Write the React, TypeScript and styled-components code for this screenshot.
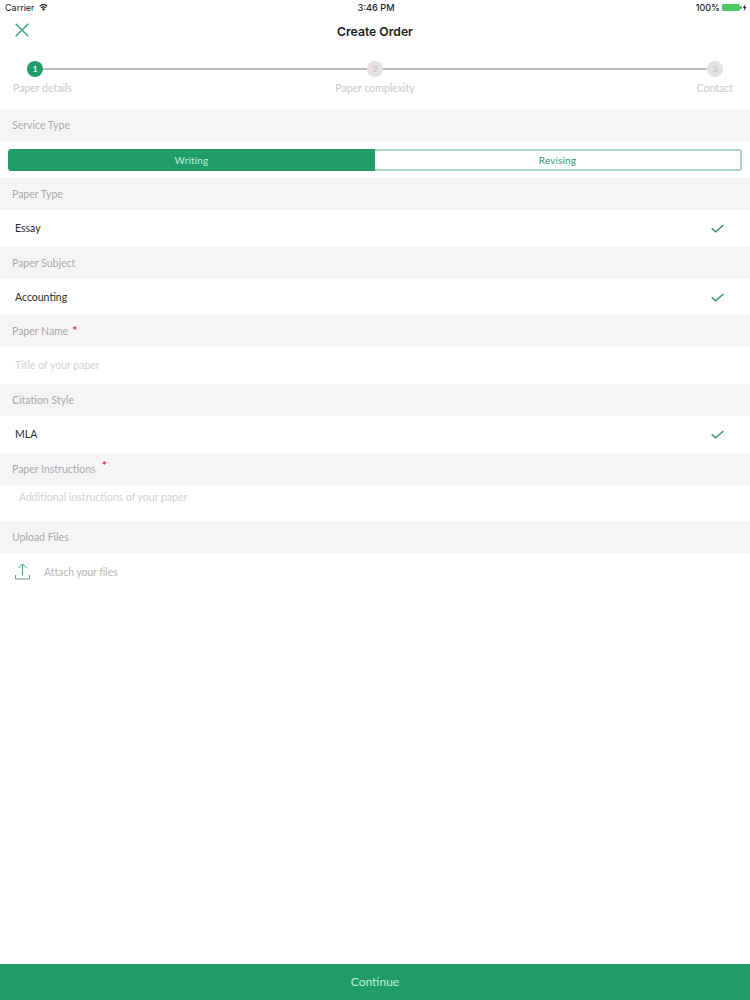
import React from "react";
import styled, { createGlobalStyle } from "styled-components";

const Global = createGlobalStyle`
  html, body { margin: 0; padding: 0; background: #fff; }
  * { box-sizing: border-box; }
`;

const GREEN = "#1f9c69";

const Page = styled.div`
  width: 750px;
  height: 1000px;
  display: flex;
  flex-direction: column;
  font-family: Lato, "Liberation Sans", sans-serif;
  background: #fff;
  overflow: hidden;
`;

const StatusBar = styled.div`
  height: 15px;
  display: grid;
  grid-template-columns: 1fr auto 1fr;
  align-items: center;
  padding: 0 3px 0 5px;
  font-family: Inter, "Liberation Sans", sans-serif;
  font-size: 9px;
  color: #222;
`;

const StatusLeft = styled.div`
  display: flex;
  align-items: center;
  gap: 4px;
`;

const StatusTime = styled.div`
  font-weight: 500;
  font-size: 9.2px;
`;

const StatusRight = styled.div`
  display: flex;
  align-items: center;
  justify-content: flex-end;
  gap: 2px;
  font-weight: 500;
`;

const NavBar = styled.div`
  height: 32px;
  display: flex;
  align-items: center;
  justify-content: center;
  position: relative;
`;

const CloseButton = styled.div`
  position: absolute;
  left: 15px;
  top: 8px;
  width: 14px;
  height: 14px;
  display: flex;
`;

const Title = styled.div`
  font-family: Inter, "Liberation Sans", sans-serif;
  font-size: 12.2px;
  font-weight: 600;
  color: #1c1c1c;
`;

const Stepper = styled.div`
  height: 62px;
  padding-top: 14px;
`;

const Track = styled.div`
  display: flex;
  align-items: center;
  padding: 0 27px;
`;

const StepDot = styled.div<{ $active?: boolean }>`
  width: 16px;
  height: 16px;
  flex: none;
  border-radius: 50%;
  display: flex;
  align-items: center;
  justify-content: center;
  font-size: 8px;
  font-weight: 700;
  background: ${(p) => (p.$active ? GREEN : "#e3e1e3")};
  color: ${(p) => (p.$active ? "#fff" : "#c4c2c4")};
`;

const StepLine = styled.div`
  flex: 1;
  height: 2px;
  background: #bdbabc;
`;

const StepLabels = styled.div`
  display: grid;
  grid-template-columns: 1fr auto 1fr;
  padding: 5px 17px 0 13px;
  font-size: 10.5px;
  line-height: 13px;
  color: #c9c9c9;
`;

const MiddleLabel = styled.span`
  margin-left: 4px;
`;

const EndLabel = styled.span`
  text-align: right;
`;

const SectionHeader = styled.div`
  height: 32px;
  background: #f6f5f6;
  padding: 0 12px;
  display: flex;
  align-items: center;
  font-size: 10.5px;
  color: #a9a9a9;
`;

const Required = styled.span<{ $raised?: boolean }>`
  color: #d9304a;
  font-size: 12px;
  font-weight: 700;
  margin-left: ${(p) => (p.$raised ? "6px" : "4px")};
  transform: translateY(${(p) => (p.$raised ? "-3px" : "-1px")});
`;

const SegmentWrap = styled.div`
  height: 37px;
  padding: 8px 8px 7px;
  display: flex;
`;

const SegmentButton = styled.div<{ $active?: boolean; $side: "left" | "right" }>`
  flex: 1 1 0;
  display: flex;
  align-items: center;
  justify-content: center;
  font-size: 10px;
  letter-spacing: 0.15px;
  border: ${(p) => (p.$active ? `1px solid ${GREEN}` : "2px solid #a9d5c2")};
  ${(p) => (p.$side === "right" ? "border-left: none;" : "")}
  border-radius: ${(p) => (p.$side === "left" ? "3px 0 0 3px" : "0 3px 3px 0")};
  background: ${(p) => (p.$active ? GREEN : "#fff")};
  color: ${(p) => (p.$active ? "#bdf0d6" : GREEN)};
`;

const Row = styled.div<{ $inset?: number; $top?: boolean }>`
  height: 36.7px;
  display: flex;
  align-items: ${(p) => (p.$top ? "flex-start" : "center")};
  justify-content: space-between;
  padding: ${(p) => (p.$top ? "6px" : "0")} 26px ${(p) => (p.$top ? "0" : "1px")} ${(p) => p.$inset ?? 15}px;
`;

const Value = styled.div`
  font-size: 10.5px;
  color: #2a2a2a;
`;

const Placeholder = styled.div`
  font-size: 10.5px;
  color: #d2d2d2;
`;

const AttachRow = styled.div`
  height: 37px;
  display: flex;
  align-items: center;
  gap: 14px;
  padding-left: 15px;
  font-size: 10.5px;
  letter-spacing: -0.08px;
  color: #b5b5b5;
`;

const Spacer = styled.div`
  flex: 1;
`;

const ContinueBar = styled.div`
  height: 36px;
  background: ${GREEN};
  color: #bdf0d6;
  display: flex;
  align-items: center;
  justify-content: center;
  font-size: 12px;
  padding-bottom: 1px;
`;

const Wifi = () => (
  <svg width="9" height="7" viewBox="0 0 12 9" fill="#222">
    <path d="M6 9 3.9 6.4a3.4 3.4 0 0 1 4.2 0Z" />
    <path d="M3.2 5.5 2.2 4.3a6 6 0 0 1 7.6 0l-1 1.2a4.5 4.5 0 0 0-5.6 0Z" />
    <path d="M1.5 3.4.4 2.1a8.8 8.8 0 0 1 11.2 0l-1.1 1.3a7.2 7.2 0 0 0-9 0Z" />
  </svg>
);

const Battery = () => (
  <svg width="25" height="7" viewBox="0 0 25 7">
    <rect x="0" y="0" width="18" height="7" rx="1.5" fill="#4cc864" />
    <rect x="18.4" y="2.2" width="1.2" height="2.6" rx="0.5" fill="#333" />
    <path d="M23.5 0 20.8 3.9h1.5L21.8 7l2.8-4H23Z" fill="#222" />
  </svg>
);

const CloseIcon = () => (
  <svg width="14" height="14" viewBox="0 0 14 14" fill="none" stroke="#3aa57e" strokeWidth="1.4">
    <path d="M.7.7l12.6 12.6M13.3.7.7 13.3" />
  </svg>
);

const Check = () => (
  <svg width="13" height="11" viewBox="0 0 13 11" fill="none" stroke="#3d8f72" strokeWidth="1.4">
    <path d="M.7 6.4 4.7 9.8 12.4 3" />
  </svg>
);

const UploadIcon = () => (
  <svg width="15" height="17" viewBox="0 0 15 17" fill="none" stroke="#3aa57e" strokeWidth="1">
    <path d="M7.5 12.5V1M3.5 5l4-4 4 4" />
    <path d="M.5 12v4h14v-4" stroke="#6f9f8c" />
  </svg>
);

export default function App() {
  return (
    <Page>
      <Global />
      <StatusBar>
        <StatusLeft>
          Carrier <Wifi />
        </StatusLeft>
        <StatusTime>3:46 PM</StatusTime>
        <StatusRight>
          100% <Battery />
        </StatusRight>
      </StatusBar>
      <NavBar>
        <CloseButton>
          <CloseIcon />
        </CloseButton>
        <Title>Create Order</Title>
      </NavBar>
      <Stepper>
        <Track>
          <StepDot $active>1</StepDot>
          <StepLine />
          <StepDot>2</StepDot>
          <StepLine />
          <StepDot>3</StepDot>
        </Track>
        <StepLabels>
          <span>Paper details</span>
          <MiddleLabel>Paper complexity</MiddleLabel>
          <EndLabel>Contact</EndLabel>
        </StepLabels>
      </Stepper>

      <SectionHeader>Service Type</SectionHeader>
      <SegmentWrap>
        <SegmentButton $active $side="left">Writing</SegmentButton>
        <SegmentButton $side="right">Revising</SegmentButton>
      </SegmentWrap>

      <SectionHeader>Paper Type</SectionHeader>
      <Row>
        <Value>Essay</Value>
        <Check />
      </Row>

      <SectionHeader>Paper Subject</SectionHeader>
      <Row>
        <Value>Accounting</Value>
        <Check />
      </Row>

      <SectionHeader>
        Paper Name<Required>*</Required>
      </SectionHeader>
      <Row>
        <Placeholder>Title of your paper</Placeholder>
      </Row>

      <SectionHeader>Citation Style</SectionHeader>
      <Row>
        <Value>MLA</Value>
        <Check />
      </Row>

      <SectionHeader>
        Paper Instructions<Required $raised>*</Required>
      </SectionHeader>
      <Row $inset={19} $top>
        <Placeholder>Additional instructions of your paper</Placeholder>
      </Row>

      <SectionHeader>Upload Files</SectionHeader>
      <AttachRow>
        <UploadIcon />
        Attach your files
      </AttachRow>

      <Spacer />
      <ContinueBar>Continue</ContinueBar>
    </Page>
  );
}
